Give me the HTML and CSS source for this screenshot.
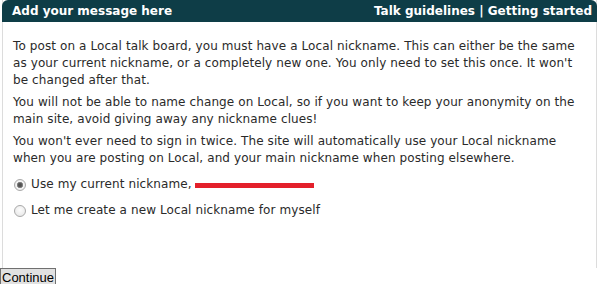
FILE: index.html
```
<!DOCTYPE html>
<html>
<head>
<meta charset="utf-8">
<link rel="stylesheet" href="styles.css">
</head>
<body>
<div class="panel">
  <div class="head">
    <span class="title">Add your message here</span>
    <span class="links"><a href="#">Talk guidelines</a> | <a href="#">Getting started</a></span>
  </div>
  <div class="content">
    <p>To post on a Local talk board, you must have a Local nickname. This can either be the same as your current nickname, or a completely new one. You only need to set this once. It won't be changed after that.</p>
    <p>You will not be able to name change on Local, so if you want to keep your anonymity on the main site, avoid giving away any nickname clues!</p>
    <p>You won't ever need to sign in twice. The site will automatically use your Local nickname when you are posting on Local, and your main nickname when posting elsewhere.</p>
    <label class="opt"><input type="radio" name="n" checked> Use my current nickname, <span class="redact"></span></label>
    <label class="opt"><input type="radio" name="n"> Let me create a new Local nickname for myself</label>
  </div>
</div>
<button class="btn">Continue</button>
</body>
</html>
```
FILE: styles.css
```
html, body { margin: 0; padding: 0; background: #fff; }
body { font-family: "DejaVu Sans", Verdana, sans-serif; font-size: 12px; color: #2a2a2a; }
.panel { margin: 0 2px; width: 595px; border-left: 1px solid #dcdcdc; border-right: 1px solid #dcdcdc; height: 268px; box-sizing: border-box; }
.head { background: #0e3d47; color: #fff; height: 22px; display: flex; justify-content: space-between; align-items: center; padding: 0 5px 0 10px; border-radius: 6px 6px 0 0; margin: 0 -1px; font-weight: bold; font-size: 12px; }
.head a { color: #fff; text-decoration: none; }
.content { padding: 16px 10px 0 10px; letter-spacing: 0.1px; }
.content p { margin: 0 0 5px 0; line-height: 17px; }
.opt { display: flex; align-items: center; line-height: 17px; margin-top: 9px; }
.opt input { -webkit-appearance: none; appearance: none; margin: 0 5px 0 1px; width: 12px; height: 12px; border-radius: 50%; border: 1px solid #a9a9a9; background: radial-gradient(circle at 50% 40%, #fdfdfd 0%, #e4e4e4 100%); box-sizing: border-box; }
.opt input:checked { background: radial-gradient(circle, #4a4a4a 0, #5c5c5c 2px, #9a9a9a 3px, #f4f4f4 3.5px, #e4e4e4 100%); }
.redact { display: inline-block; width: 119px; height: 5px; background: #e3202b; margin-left: 3px; position: relative; top: 1px; }
.btn { display: block; font-family: Arial, "Liberation Sans", sans-serif; font-size: 13px; padding: 0 1px; margin: 0; height: 18px; border: 1px solid #707070; background: #e1e1e1; border-radius: 0; color: #000; letter-spacing: 0; }
```
